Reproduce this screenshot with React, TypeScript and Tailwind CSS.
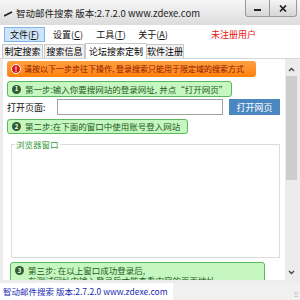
import React from "react";

const F = { fontFamily: '"Noto Sans CJK SC", "Noto Sans", sans-serif' };

function StepIcon({ n }: { n: string }) {
  return (
    <span className="flex h-[9px] w-[9px] shrink-0 items-center justify-center rounded-full bg-[#2f5f2f] text-[6px] font-bold leading-none text-white">
      {n}
    </span>
  );
}

export default function App() {
  return (
    <div className="flex h-[300px] w-[300px] flex-col overflow-hidden bg-white text-[9px] leading-none" style={F}>
      {/* title bar */}
      <div className="flex h-[25px] shrink-0 items-start bg-gradient-to-b from-[#f7f7f7] to-[#dcdcdc]">
        <div className="flex h-[27px] items-center pl-[4px]">
          <svg width="9" height="6" viewBox="0 0 9 6">
            <path d="M0 5 L8 1" stroke="#222" strokeWidth="1.8" />
          </svg>
          <span className="ml-[3px] whitespace-nowrap text-[9.5px] text-[#222]">智动邮件搜索 版本:2.7.2.0 www.zdexe.com</span>
        </div>
        <div className="ml-auto mr-[3px] flex h-[17px]">
          <div className="flex w-[25px] items-center justify-center rounded-bl-[3px] border border-t-0 border-[#9a9a9a] bg-gradient-to-b from-[#f4f4f4] to-[#d6d6d6]">
            <div className="mt-[3px] h-[2px] w-[7px] bg-[#222]" />
          </div>
          <div className="flex w-[27px] items-center justify-center rounded-br-[3px] border border-l-0 border-t-0 border-[#9a9a9a] bg-gradient-to-b from-[#f4f4f4] to-[#d6d6d6]">
            <svg width="8" height="7" viewBox="0 0 8 7">
              <path d="M1 0.5 L7 6.5 M7 0.5 L1 6.5" stroke="#222" strokeWidth="1.7" />
            </svg>
          </div>
        </div>
      </div>

      {/* menu bar */}
      <div className="flex h-[18px] shrink-0 items-center bg-white text-[#111]">
        <div className="ml-[4px] flex h-[15px] w-[41px] items-center justify-center border border-[#7eb4ea] bg-[#cde4f9]">文件(<u>F</u>)</div>
        <div className="ml-[5px] w-[36px] text-center">设置(<u>C</u>)</div>
        <div className="ml-[7px] w-[36px] text-center">工具(<u>T</u>)</div>
        <div className="ml-[6px] w-[36px] text-center">关于(<u>A</u>)</div>
        <div className="ml-[40px] text-[#ee1111]">未注册用户</div>
      </div>

      {/* tabs */}
      <div className="flex h-[16px] shrink-0 items-end border-b border-[#d8d8d8] bg-white pl-[2px]">
        <div className="flex h-[14px] w-[41px] items-center justify-center border border-b-0 border-[#c8c8c8] bg-[#f0f0f0]">制定搜索</div>
        <div className="ml-[1px] flex h-[14px] w-[41px] items-center justify-center border border-b-0 border-[#c8c8c8] bg-[#f0f0f0]">搜索信息</div>
        <div className="mb-[-1px] flex h-[16px] w-[62px] items-center justify-center border border-b-0 border-[#c8c8c8] bg-white">论坛搜索定制</div>
        <div className="flex h-[14px] w-[37px] items-center justify-center border border-b-0 border-l-0 border-[#c8c8c8] bg-[#f0f0f0]">软件注册</div>
      </div>

      {/* content */}
      <div className="flex h-[221px] shrink-0 bg-[#ececec]">
        <div className="ml-[3px] flex w-[282px] flex-col overflow-hidden bg-white pl-[4px] pt-[2px]">
          <div className="flex h-[16px] w-[249px] shrink-0 items-center rounded-[3px] bg-gradient-to-b from-[#ffa040] to-[#ff8000] pl-[4px] text-[8px] text-[#8a1a00]">
            <span className="flex h-[10px] w-[10px] shrink-0 items-center justify-center rounded-full border border-white bg-[#d81818] text-[7px] font-bold text-white">!</span>
            <span className="ml-[3px] whitespace-nowrap">请按以下一步步往下操作, 登录搜索只能用于限定域的搜索方式</span>
          </div>
          <div className="mt-[4px] flex h-[16px] w-[225px] shrink-0 items-center rounded-[3px] border border-[#5cb85c] bg-[#c6f7c0] pl-[4px] text-[8.5px] text-[#1d5a1d]">
            <StepIcon n="1" />
            <span className="ml-[4px] whitespace-nowrap">第一步:输入你要搜网站的登录网址, 并点“打开网页”</span>
          </div>
          <div className="mt-[2px] flex h-[16px] shrink-0 items-center text-[#111]">
            <span className="w-[50px]">打开页面:</span>
            <div className="h-[16px] w-[166px] border border-[#a0a0a0] bg-white" />
            <div className="ml-[6px] flex h-[16px] w-[51px] items-center justify-center bg-[#4a87c0] text-white">打开网页</div>
          </div>
          <div className="mt-[4px] flex h-[15px] w-[181px] shrink-0 items-center rounded-[3px] border border-[#5cb85c] bg-[#c6f7c0] pl-[4px] text-[8.5px] text-[#1d5a1d]">
            <StepIcon n="2" />
            <span className="ml-[4px] whitespace-nowrap">第二步:在下面的窗口中使用账号登入网站</span>
          </div>
          <div className="relative ml-[4px] mt-[10px] h-[114px] w-[269px] shrink-0 border border-[#dcdcdc]">
            <span className="absolute left-[3px] top-[-5px] bg-white px-[1px] text-[8.5px] text-[#3a9a3a]">浏览器窗口</span>
          </div>
          <div className="ml-[3px] mt-[4px] flex h-[30px] w-[255px] shrink-0 flex-col rounded-[3px] border border-[#5cb85c] bg-[#c6f7c0] pl-[4px] pt-[3px] text-[8.5px] leading-[9px] text-[#1d5a1d]">
            <div className="flex h-[9px] items-center">
              <StepIcon n="3" />
              <span className="ml-[4px] whitespace-nowrap">第三步: 在以上窗口成功登录后,</span>
            </div>
            <div className="ml-[13px] mt-[1px] whitespace-nowrap">在测试网址中输入登录后才能查看内容的页面地址</div>
          </div>
        </div>
        <div className="flex w-[13px] flex-col items-center bg-[#ececec]">
          <svg className="mt-[8px]" width="7" height="5" viewBox="0 0 7 5">
            <path d="M1 4 L3.5 1.5 L6 4" stroke="#444" strokeWidth="1.3" fill="none" />
          </svg>
          <div className="mt-[4px] h-[104px] w-[11px] bg-[#cdcdcd]" />
          <svg className="mt-auto mb-[5px]" width="7" height="5" viewBox="0 0 7 5">
            <path d="M1 1 L3.5 3.5 L6 1" stroke="#444" strokeWidth="1.3" fill="none" />
          </svg>
        </div>
      </div>

      <div className="h-[3px] shrink-0 bg-[#ececec]" />

      {/* status bar */}
      <div className="flex h-[17px] shrink-0 items-center bg-[#f0f0f0]">
        <div className="flex h-full w-[173px] items-center whitespace-nowrap bg-white pl-[3px] text-[8.5px] text-[#1a2ab0]">智动邮件搜索 版本:2.7.2.0 www.zdexe.com</div>
        <div className="ml-auto mr-[2px] mt-auto mb-[2px] text-[6px] leading-none text-[#999]">⠿</div>
      </div>
    </div>
  );
}
